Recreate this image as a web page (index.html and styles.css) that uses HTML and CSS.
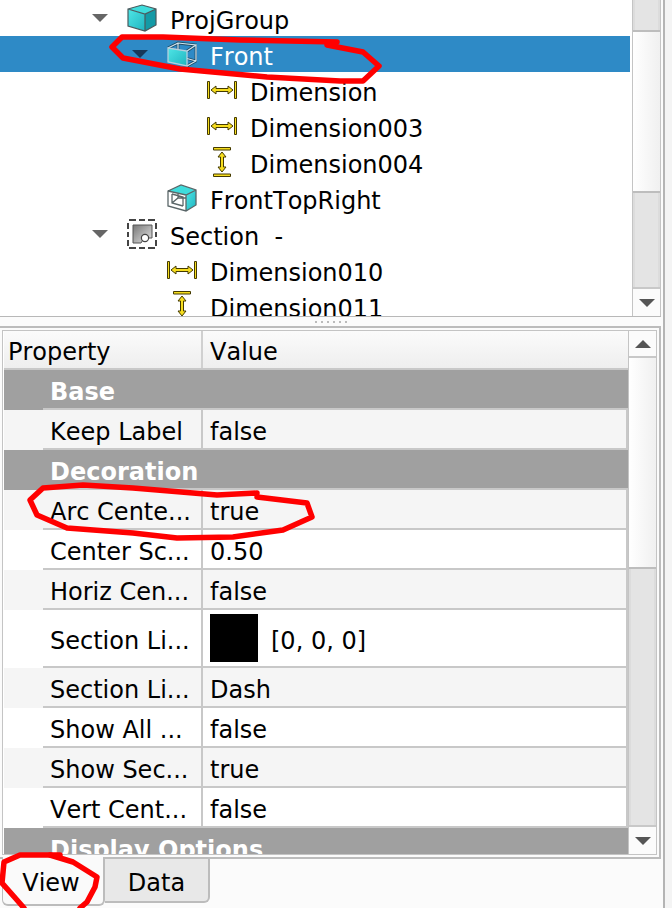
FILE: index.html
```html
<!DOCTYPE html>
<html lang="en">
<head>
    <meta charset="UTF-8">
    <title>Model tree and properties</title>
    <link rel="stylesheet" href="styles.css">
</head>
<body>

<svg class="sprite" width="0" height="0">
    <defs>
        <linearGradient id="teal" x1="0" y1="0" x2="1" y2="1">
            <stop offset="0" stop-color="#4fe6e6"/>
            <stop offset="1" stop-color="#1fb4c0"/>
        </linearGradient>
        <linearGradient id="sectionFill" x1="0" y1="0" x2="1" y2="1">
            <stop offset="0" stop-color="#777"/>
            <stop offset="1" stop-color="#e4e4e4"/>
        </linearGradient>
        <symbol id="icon-cube" viewBox="0 0 30 28">
            <path d="M1 5 15 1 29 5 18 10Z" fill="#3fdcdc"/>
            <path d="M1 5 18 10V27L1 22Z" fill="url(#teal)"/>
            <path d="M18 10 29 5V21L18 27Z" fill="#149aa6"/>
            <path d="M1 5 15 1 29 5V21L18 27 1 22ZM1 5 18 10 29 5M18 10V27" fill="none" stroke="#4a5a5e" stroke-width="1.2"/>
        </symbol>
        <symbol id="icon-front" viewBox="0 0 30 26">
            <path d="M11 2V15M11 15 20 18M1 7 11 2 29 4 20 10M20 25 29 20V4M11 15 29 20" fill="none" stroke="#1f4d66" stroke-width="2.8"/>
            <path d="M11 2V15M11 15 20 18M1 7 11 2 29 4 20 10M20 25 29 20V4M11 15 29 20" fill="none" stroke="#d4e6f0" stroke-width="1.2"/>
            <path d="M1 7 20 10V25L1 21Z" fill="url(#teal)" stroke="#b4cfdd" stroke-width="1.3"/>
        </symbol>
        <symbol id="icon-topright" viewBox="0 0 30 28">
            <path d="M1 7 14 1 29 6 19 11Z" fill="#3fdcdc"/>
            <path d="M19 11 29 6V21L19 27Z" fill="url(#teal)"/>
            <path d="M1 7 14 1 29 6V21L19 27 1 22ZM1 7 19 11 29 6M19 11V27M5 10 16 13V22M5 10V19L16 22M5 19 11 14H19M11 14V9" fill="none" stroke="#5a6668" stroke-width="1.3"/>
        </symbol>
        <symbol id="icon-section" viewBox="0 0 30 30">
            <path d="M2 1H9M12 1H18M21 1H28M2 29H9M12 29H18M21 29H28M1 4V10M1 13V18M1 21V27M29 4V10M29 13V18M29 21V27" fill="none" stroke="#444" stroke-width="2"/>
            <path d="M6 6H25V19H17L14 24H6Z" fill="url(#sectionFill)" stroke="#555" stroke-width="1"/>
            <circle cx="18" cy="19" r="3.6" fill="#fff" stroke="#444" stroke-width="1.2"/>
        </symbol>
        <symbol id="icon-dim-h" viewBox="0 0 30 18">
            <path d="M.5.5H2.5V17.5H.5ZM27.5.5H29.5V17.5H27.5Z" fill="#f6dd1e" stroke="#443a00" stroke-width="1"/>
            <path d="M4 9 9 5V7.5H21V5L26 9 21 13V10.5H9V13Z" fill="#f6dd1e" stroke="#443a00" stroke-width="1"/>
        </symbol>
        <symbol id="icon-dim-v" viewBox="0 0 18 30">
            <path d="M.5.5H17.5V3H.5ZM.5 27H17.5V29.5H.5Z" fill="#f6dd1e" stroke="#443a00" stroke-width="1"/>
            <path d="M9 5 13 10H10.5V20H13L9 25 5 20H7.5V10H5Z" fill="#f6dd1e" stroke="#443a00" stroke-width="1"/>
        </symbol>
    </defs>
</svg>

<div class="dock">
    <div class="tree-pane">
        <div class="tree">
            <div class="node d0"><span class="arrow"></span><span class="slot"><svg class="ico-cube"><use href="#icon-cube"/></svg></span>ProjGroup</div>
            <div class="node d1 selected"><span class="arrow"></span><span class="slot"><svg class="ico-front"><use href="#icon-front"/></svg></span>Front</div>
            <div class="node d2"><span class="arrow none"></span><span class="slot"><svg class="ico-dim-h"><use href="#icon-dim-h"/></svg></span>Dimension</div>
            <div class="node d2"><span class="arrow none"></span><span class="slot"><svg class="ico-dim-h"><use href="#icon-dim-h"/></svg></span>Dimension003</div>
            <div class="node d2"><span class="arrow none"></span><span class="slot"><svg class="ico-dim-v"><use href="#icon-dim-v"/></svg></span>Dimension004</div>
            <div class="node d1"><span class="arrow none"></span><span class="slot"><svg class="ico-cube"><use href="#icon-topright"/></svg></span>FrontTopRight</div>
            <div class="node d0"><span class="arrow"></span><span class="slot"><svg class="ico-section"><use href="#icon-section"/></svg></span>Section&nbsp; -</div>
            <div class="node d1"><span class="arrow none"></span><span class="slot"><svg class="ico-dim-h"><use href="#icon-dim-h"/></svg></span>Dimension010</div>
            <div class="node d1"><span class="arrow none"></span><span class="slot"><svg class="ico-dim-v"><use href="#icon-dim-v"/></svg></span>Dimension011</div>
        </div>
        <div class="scrollbar">
            <div class="track track-top"></div>
            <div class="thumb thumb-tree"></div>
            <div class="track"></div>
            <div class="step"><span class="tri-down"></span></div>
        </div>
    </div>

    <div class="splitter"><span class="grip"></span></div>

    <div class="prop-frame">
        <div class="prop-inner">
            <div class="prop-table">
                <div class="prop-head">
                    <div class="head-name">Property</div>
                    <div class="head-value">Value</div>
                </div>
                <div class="group"><div class="group-name">Base</div></div>
                <div class="prop alt"><div class="name">Keep Label</div><div class="value">false</div></div>
                <div class="group"><div class="group-name">Decoration</div></div>
                <div class="prop alt"><div class="name">Arc Cente...</div><div class="value">true</div></div>
                <div class="prop"><div class="name">Center Sc...</div><div class="value">0.50</div></div>
                <div class="prop alt"><div class="name">Horiz Cen...</div><div class="value">false</div></div>
                <div class="prop tall"><div class="name">Section Li...</div><div class="value"><span class="swatch"></span>[0, 0, 0]</div></div>
                <div class="prop alt"><div class="name">Section Li...</div><div class="value">Dash</div></div>
                <div class="prop"><div class="name">Show All ...</div><div class="value">false</div></div>
                <div class="prop alt"><div class="name">Show Sec...</div><div class="value">true</div></div>
                <div class="prop"><div class="name">Vert Cent...</div><div class="value">false</div></div>
                <div class="group"><div class="group-name">Display Options</div></div>
            </div>
            <div class="scrollbar scrollbar-prop">
                <div class="step step-up"><span class="tri-up"></span></div>
                <div class="thumb thumb-prop"></div>
                <div class="track"></div>
                <div class="step"><span class="tri-down"></span></div>
            </div>
        </div>
    </div>

    <div class="tabs">
        <div class="tab active">View</div>
        <div class="tab">Data</div>
    </div>
</div>

<!-- red marks drawn over the screenshot -->
<svg class="marks" viewBox="0 0 672 908">
    <path d="M337 42 240 40 163 37 122 37 112 47 123 58 180 69 267 77 340 81 363 81 379 66 363 52 327 45"/>
    <path d="M257 493 217 495 133 488 83 485 43 488 30 500 37 515 67 528 133 533 177 538 233 537 283 530 312 517 307 503 257 497"/>
    <path d="M60 855 20 855 4 862 2 883 17 900 24 908"/>
    <path d="M50 855 73 862 97 877 95 887 87 902 80 908"/>
</svg>

</body>
</html>
```

FILE: styles.css
```css
* {
    box-sizing: border-box;
}
html, body {
    margin: 0;
    height: 100%;
}
body {
    position: relative;
    width: 672px;
    height: 908px;
    overflow: hidden;
    background-color: #f4f4f4;
    font-family: "DejaVu Sans", sans-serif;
    font-size: 24px;
    font-kerning: none;
    color: #000;
}
.sprite {
    position: absolute;
}
.dock {
    width: 665px;
    height: 908px;
    background-color: #fbfbfb;
    border-right: 2px solid #b4b4b4;
}

/* tree */
.tree-pane {
    display: flex;
    width: 661px;
    height: 317px;
    border-bottom: 1px solid #b8b8b8;
    background-color: #fff;
}
.tree {
    width: 632px;
    overflow: hidden;
}
.node {
    display: flex;
    align-items: center;
    width: 630px;
    height: 36px;
    padding-top: 5px;
    white-space: nowrap;
}
.d0 { padding-left: 92px; }
.d1 { padding-left: 132px; }
.d2 { padding-left: 172px; }
.selected {
    background-color: #2e8ac6;
    color: #fff;
}
.arrow {
    flex: none;
    width: 16px;
    height: 8px;
    margin-top: -5px;
    margin-right: 19px;
    border-style: solid;
    border-width: 8px 8px 0;
    border-color: #666 transparent transparent;
}
.selected .arrow {
    border-top-color: #17385a;
}
.arrow.none {
    border-color: transparent;
}
.slot {
    display: flex;
    flex: none;
    width: 44px;
    margin-top: -5px;
    margin-right: -1px;
}
.ico-cube { width: 30px; height: 28px; }
.ico-front { width: 30px; height: 26px; }
.ico-section { width: 30px; height: 30px; }
.ico-dim-h { width: 30px; height: 18px; }
.ico-dim-v { width: 18px; height: 30px; margin-left: 6px; }

/* scrollbars */
.scrollbar {
    display: flex;
    flex: none;
    flex-direction: column;
    width: 29px;
    border-left: 1px solid #c4c4c4;
    border-right: 1px solid #c4c4c4;
    background-color: #fbfbfb;
}
.track {
    flex: 1;
    background-color: #e4e4e4;
    box-shadow: inset 2px 0 0 #dcdcdc, inset -2px 0 0 #dcdcdc;
}
.track-top {
    flex: none;
    height: 32px;
    border-bottom: 2px solid #bdbdbd;
}
.thumb {
    flex: none;
    background: linear-gradient(to right, #fff, #f0f0f0);
    border-bottom: 2px solid #bdbdbd;
}
.thumb-tree { height: 161px; }
.thumb-prop { height: 211px; }
.step {
    display: flex;
    flex: none;
    align-items: center;
    justify-content: center;
    height: 29px;
    border-top: 2px solid #c8c8c8;
    background-color: #fbfbfb;
}
.step-up {
    height: 27px;
    border-top: 0;
    border-bottom: 2px solid #c8c8c8;
}
.tri-down, .tri-up {
    border-style: solid;
    border-color: transparent;
}
.tri-down {
    border-width: 8px 8px 0;
    border-top-color: #555;
}
.tri-up {
    border-width: 0 8px 8px;
    border-bottom-color: #555;
}

/* splitter */
.splitter {
    display: flex;
    align-items: center;
    justify-content: center;
    width: 661px;
    height: 9px;
}
.grip {
    width: 32px;
    height: 2px;
    background: repeating-linear-gradient(to right, #bbb 0 2px, transparent 2px 6px);
}

/* property editor */
.prop-frame {
    width: 661px;
    height: 533px;
    padding: 2px;
    border-top: 2px solid #bcbcbc;
    border-right: 2px solid #bcbcbc;
    border-bottom: 2px solid #bcbcbc;
}
.prop-inner {
    display: flex;
    height: 525px;
    padding-left: 1px;
    border: 1px solid #c4c4c4;
    background-color: #fff;
}
.prop-table {
    flex: 1;
    min-width: 0;
    overflow: hidden;
}
.scrollbar-prop {
    width: 28px;
    border-right: 0;
}
.prop-head {
    display: flex;
    height: 39px;
    border-bottom: 2px solid #c8c8c8;
    background: linear-gradient(to bottom, #fbfbfb, #eeeeee);
}
.head-name {
    display: flex;
    align-items: center;
    width: 199px;
    padding: 5px 0 0 4px;
    border-right: 2px solid #d0d0d0;
}
.head-value {
    display: flex;
    align-items: center;
    padding: 5px 0 0 7px;
}
.group {
    height: 40px;
    padding-left: 39px;
    background-color: #a0a0a0;
}
.group-name {
    display: flex;
    align-items: center;
    height: 40px;
    padding: 6px 0 0 7px;
    border-bottom: 2px solid #c8c8c8;
    font-weight: bold;
    color: #fff;
}
.prop {
    display: flex;
    height: 40px;
    padding-left: 39px;
    background-color: #fff;
}
.prop.alt {
    background-color: #f5f5f5;
}
.prop.tall {
    height: 58px;
}
.name, .value {
    display: flex;
    align-items: center;
    padding-top: 5px;
    border-bottom: 2px solid #c8c8c8;
    white-space: nowrap;
}
.name {
    width: 160px;
    padding-left: 7px;
    border-right: 2px solid #c8c8c8;
}
.value {
    flex: 1;
    padding-left: 7px;
    border-right: 2px solid #c8c8c8;
}
.swatch {
    width: 48px;
    height: 48px;
    margin-top: -5px;
    margin-right: 13px;
    background-color: #000;
}

/* tabs */
.tabs {
    display: flex;
    height: 49px;
    padding-left: 2px;
}
.tab {
    display: flex;
    align-items: center;
    justify-content: center;
    padding-top: 5px;
}
.tab:first-child {
    width: 103px;
    height: 49px;
    margin-top: -2px;
    padding-right: 4px;
    background-color: #fafafa;
    border: 2px solid #bcbcbc;
    border-top: 0;
    border-left-width: 1px;
    border-radius: 0 0 6px 6px;
}
.tab:last-child {
    width: 105px;
    height: 46px;
    margin-top: -2px;
    background-color: #e8e8e8;
    border: 2px solid #bcbcbc;
    border-left: 0;
    border-radius: 0 0 6px 0;
}

/* red marks */
.marks {
    position: absolute;
    top: 0;
    left: 0;
    width: 672px;
    height: 908px;
    pointer-events: none;
}
.marks path {
    fill: none;
    stroke: #f00;
    stroke-width: 5.5;
    stroke-linejoin: round;
    stroke-linecap: round;
}
```
